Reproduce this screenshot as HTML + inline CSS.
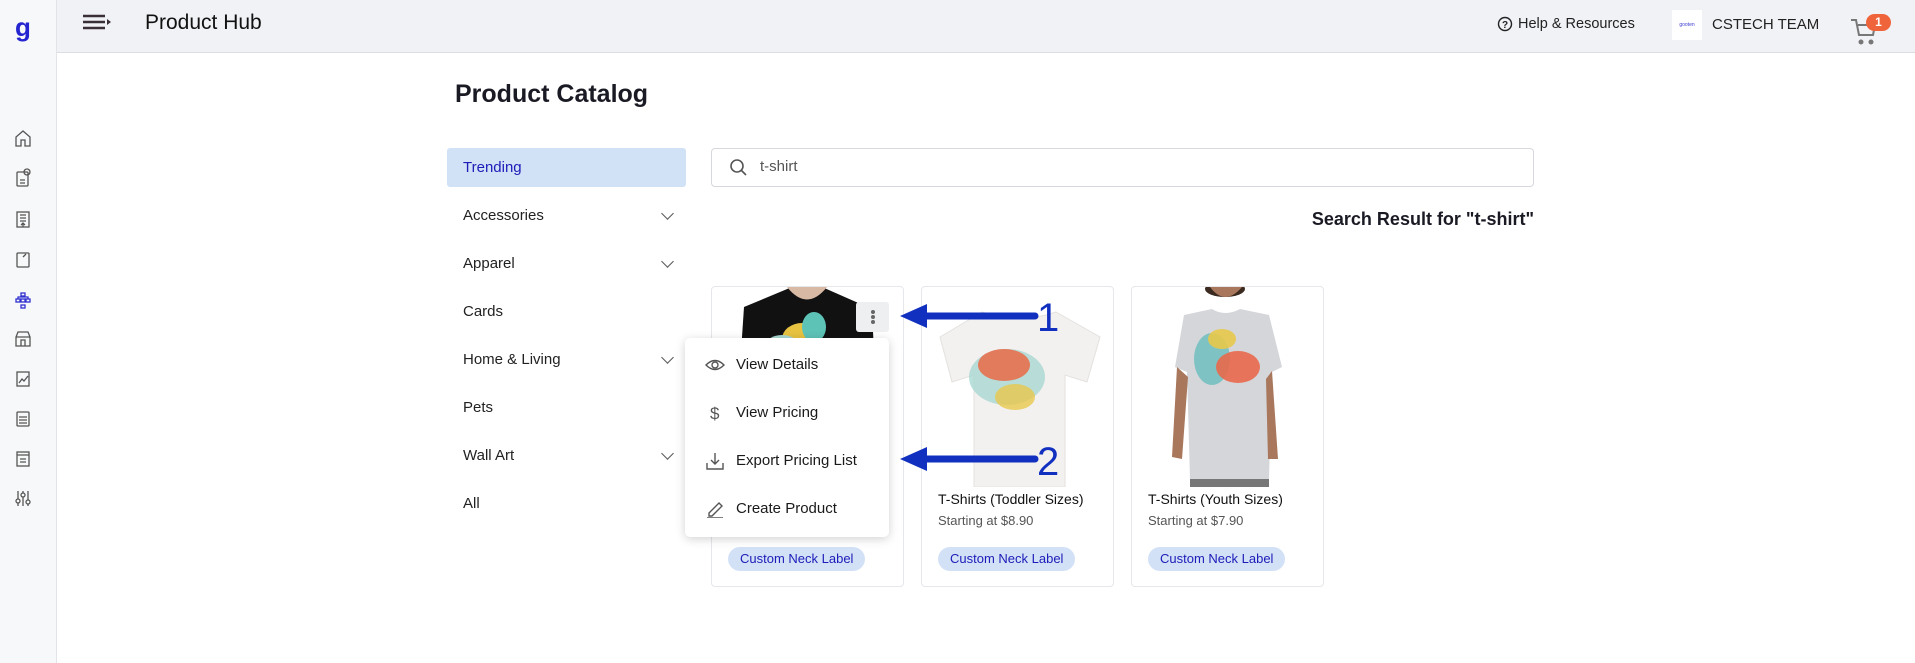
<!DOCTYPE html>
<html><head><meta charset="utf-8"><style>
*{box-sizing:border-box;margin:0;padding:0}
body{width:1915px;height:663px;overflow:hidden;background:#fff;font-family:"Liberation Sans",sans-serif;color:#1e1e2a;position:relative}
.abs{position:absolute}
.side{left:0;top:0;width:57px;height:663px;background:#f7f8fa;border-right:1px solid #e3e4e8}
.head{left:57px;top:0;right:0;height:53px;background:#f1f2f6;border-bottom:1px solid #dcdde2}
.cat{left:447px;width:239px;height:39px;font-size:15px;line-height:39px;padding-left:16px;color:#222}
.chev{position:absolute;right:14px;top:13px;width:9px;height:9px;border-right:1.5px solid #555;border-bottom:1.5px solid #555;transform:rotate(45deg)}
.card{top:286px;width:193px;height:301px;border:1px solid #e6e7ea;border-radius:4px;overflow:hidden;background:#fff}
.title{position:absolute;left:16px;top:204px;font-size:14px;color:#111}
.price{position:absolute;left:16px;top:226px;font-size:13px;color:#555}
.chip{position:absolute;left:16px;top:260px;height:24px;padding:0 12px;border-radius:12px;background:#d3e1f7;color:#1c1cb8;font-size:13px;line-height:24px}
.mi{left:0;width:204px;height:48px;font-size:15px;line-height:48px;padding-left:51px;color:#1a1a1a}
.mi svg{position:absolute;left:20px;top:15px}
</style></head><body>
<div class="abs side"></div>
<div class="abs" style="left:15px;top:12px;font-size:26px;font-weight:bold;color:#2424d0">g</div>
<svg class="abs" style="left:13px;top:128px" width="20" height="395" viewBox="0 0 20 395" fill="none" stroke="#555" stroke-width="1.3">
<path d="M3 18V9L10 3L17 9V18H12V12H8V18Z"/>
<rect x="4" y="44" width="11" height="14" rx="1"/><circle cx="14" cy="44" r="3"/><path d="M7 52H12M7 55H12"/>
<rect x="4" y="84" width="12" height="15"/><path d="M7 87H13M7 90H13M7 93H13M10 99V95M8 97L10 95L12 97"/>
<rect x="4" y="125" width="12" height="14" rx="1"/><path d="M13 126L10 129"/>
<g stroke="#3030d0"><rect x="8" y="165" width="4" height="3"/><rect x="3" y="171" width="4" height="3"/><rect x="8" y="171" width="4" height="3"/><rect x="13" y="171" width="4" height="3"/><rect x="8" y="177" width="4" height="3"/><path d="M5 171V169H15V171"/></g>
<path d="M3 209L5 204H15L17 209V218H3ZM3 209H17M8 218V212H12V218"/>
<rect x="4" y="244" width="12" height="14"/><path d="M6 255L9 251L11 253L15 248"/>
<rect x="4" y="284" width="12" height="14" rx="1"/><path d="M6 289H14M6 292H14M6 295H14"/>
<rect x="4" y="324" width="12" height="14"/><path d="M4 327H16M7 331H13M7 334H13"/>
<path d="M5 363V378M10 363V378M15 363V378"/><circle cx="5" cy="373" r="2" fill="#f7f8fa"/><circle cx="10" cy="367" r="2" fill="#f7f8fa"/><circle cx="15" cy="374" r="2" fill="#f7f8fa"/>
</svg>
<div class="abs head"></div>
<svg class="abs" style="left:83px;top:14px" width="30" height="16"><path d="M0 2H22M0 8H22M0 14H22" stroke="#3a2f36" stroke-width="2.4"/><path d="M24 5L28 8L24 11Z" fill="#3a2f36"/></svg>
<div class="abs" style="left:145px;top:11px;font-size:21px;color:#111">Product Hub</div>
<svg class="abs" style="left:1497px;top:16px" width="16" height="16"><circle cx="8" cy="8" r="6.5" fill="none" stroke="#222" stroke-width="1.4"/><text x="8" y="12" font-size="10" text-anchor="middle" font-family="Liberation Sans" font-weight="bold" fill="#222">?</text></svg>
<div class="abs" style="left:1518px;top:16px;font-size:14.5px;color:#222">Help &amp; Resources</div>
<div class="abs" style="left:1672px;top:10px;width:30px;height:30px;background:#fff;font-size:5px;color:#3a3ad0;text-align:center;line-height:30px">gooten</div>
<div class="abs" style="left:1712px;top:16px;font-size:15px;color:#222">CSTECH TEAM</div>
<svg class="abs" style="left:1850px;top:17px" width="30" height="28" fill="none" stroke="#777" stroke-width="2"><path d="M1 3H6L9 18H23L25 8H8"/><circle cx="11" cy="25" r="1.5" fill="#777"/><circle cx="21" cy="25" r="1.5" fill="#777"/></svg>
<div class="abs" style="left:1866px;top:14px;width:25px;height:17px;border-radius:9px;background:#f0643c;color:#fff;font-size:12px;font-weight:bold;text-align:center;line-height:17px">1</div>

<div class="abs" style="left:455px;top:80px;font-size:25px;font-weight:bold;color:#1a1a24">Product Catalog</div>

<div class="abs cat" style="top:148px;background:#d1e1f6;color:#1c1cb8;border-radius:3px">Trending</div>
<div class="abs cat" style="top:196px">Accessories<span class="chev"></span></div>
<div class="abs cat" style="top:244px">Apparel<span class="chev"></span></div>
<div class="abs cat" style="top:292px">Cards</div>
<div class="abs cat" style="top:340px">Home &amp; Living<span class="chev"></span></div>
<div class="abs cat" style="top:388px">Pets</div>
<div class="abs cat" style="top:436px">Wall Art<span class="chev"></span></div>
<div class="abs cat" style="top:484px">All</div>

<div class="abs" style="left:711px;top:148px;width:823px;height:39px;border:1px solid #d6d8dd;border-radius:4px"></div>
<svg class="abs" style="left:729px;top:158px" width="20" height="20" fill="none" stroke="#555" stroke-width="1.6"><circle cx="8" cy="8" r="6"/><path d="M12.5 12.5L17 17"/></svg>
<div class="abs" style="left:760px;top:158px;font-size:15px;color:#555">t-shirt</div>
<div class="abs" style="right:381px;top:209px;font-size:18px;font-weight:bold;color:#1a1a24">Search Result for "t-shirt"</div>

<div class="abs card" style="left:711px">
<svg width="193" height="200" style="position:absolute;left:0;top:0"><path d="M20 200L32 20L80 0H110L160 22L168 200Z" fill="#111"/><path d="M75 0Q95 25 115 0" fill="#d8b9a4"/><ellipse cx="90" cy="52" rx="20" ry="16" fill="#e7c341"/><ellipse cx="102" cy="40" rx="12" ry="15" fill="#5ec3b7"/><ellipse cx="70" cy="58" rx="16" ry="10" fill="#a9d8d2"/></svg>
<div class="chip">Custom Neck Label</div>
</div>
<div class="abs" style="left:856px;top:302px;width:33px;height:30px;background:#eeeff1;border-radius:3px"><div style="position:absolute;left:15px;top:8px;width:4px;height:4px;border-radius:2px;background:#666;box-shadow:0 5px 0 #666,0 10px 0 #666"></div></div>
<div class="abs card" style="left:921px">
<svg width="193" height="200" style="position:absolute;left:0;top:0"><path d="M18 50L60 25Q97 38 134 25L178 50L165 95L143 88V200H52V88L30 95Z" fill="#f3f1f0" stroke="#e4e1de"/><ellipse cx="85" cy="90" rx="38" ry="28" fill="#a9d8d2" opacity=".8"/><ellipse cx="82" cy="78" rx="26" ry="16" fill="#e6704f" opacity=".9"/><ellipse cx="93" cy="110" rx="20" ry="13" fill="#e9c84e" opacity=".8"/></svg>
<div class="title">T-Shirts (Toddler Sizes)</div>
<div class="price">Starting at $8.90</div>
<div class="chip">Custom Neck Label</div>
</div>
<div class="abs card" style="left:1131px">
<svg width="193" height="200" style="position:absolute;left:0;top:0"><ellipse cx="93" cy="2" rx="20" ry="8" fill="#3a2a20"/><path d="M78 0Q93 20 110 0" fill="#a8775c"/><path d="M52 28L80 22Q93 30 108 22L137 28L150 80L140 85L137 192H58L55 85L43 80Z" fill="#d5d6da"/><path d="M45 80L40 170L50 172L56 90ZM140 84L146 172L136 172L134 92Z" fill="#a8775c"/><path d="M58 192H137V200H58Z" fill="#777"/><ellipse cx="80" cy="72" rx="18" ry="26" fill="#7fc2c3"/><ellipse cx="106" cy="80" rx="22" ry="16" fill="#e9694b" opacity=".9"/><ellipse cx="90" cy="52" rx="14" ry="10" fill="#e8c94a" opacity=".9"/></svg>
<div class="title">T-Shirts (Youth Sizes)</div>
<div class="price">Starting at $7.90</div>
<div class="chip">Custom Neck Label</div>
</div>

<div class="abs" style="left:685px;top:338px;width:204px;height:199px;background:#fff;border-radius:5px;box-shadow:0 2px 10px rgba(0,0,0,.18)">
<div class="abs mi" style="top:3px"><svg width="20" height="18" fill="none" stroke="#555" stroke-width="1.4"><path d="M1 9Q10 0 19 9Q10 18 1 9Z"/><circle cx="10" cy="9" r="3"/></svg>View Details</div>
<div class="abs mi" style="top:51px"><svg width="20" height="18"><text x="5" y="15" font-size="17" fill="#555" font-family="Liberation Sans">$</text></svg>View Pricing</div>
<div class="abs mi" style="top:99px"><svg width="20" height="18" fill="none" stroke="#555" stroke-width="1.4"><path d="M2 11V17H18V11M10 1V12M6 8L10 12L14 8"/></svg>Export Pricing List</div>
<div class="abs mi" style="top:147px"><svg width="20" height="18" fill="none" stroke="#555" stroke-width="1.4"><path d="M4 13L14 3L17 6L7 16H4Z M2 18H18"/></svg>Create Product</div>
</div>

<svg class="abs" style="left:895px;top:295px" width="180" height="185">
<path d="M140 21H30" stroke="#1230c0" stroke-width="7" stroke-linecap="round"/><path d="M5 21L32 9V33Z" fill="#1230c0"/>
<text x="142" y="36" font-size="40" fill="#1230c0" font-family="Liberation Sans">1</text>
<path d="M140 164H30" stroke="#1230c0" stroke-width="7" stroke-linecap="round"/><path d="M5 164L32 152V176Z" fill="#1230c0"/>
<text x="142" y="180" font-size="40" fill="#1230c0" font-family="Liberation Sans">2</text>
</svg>
</body></html>
